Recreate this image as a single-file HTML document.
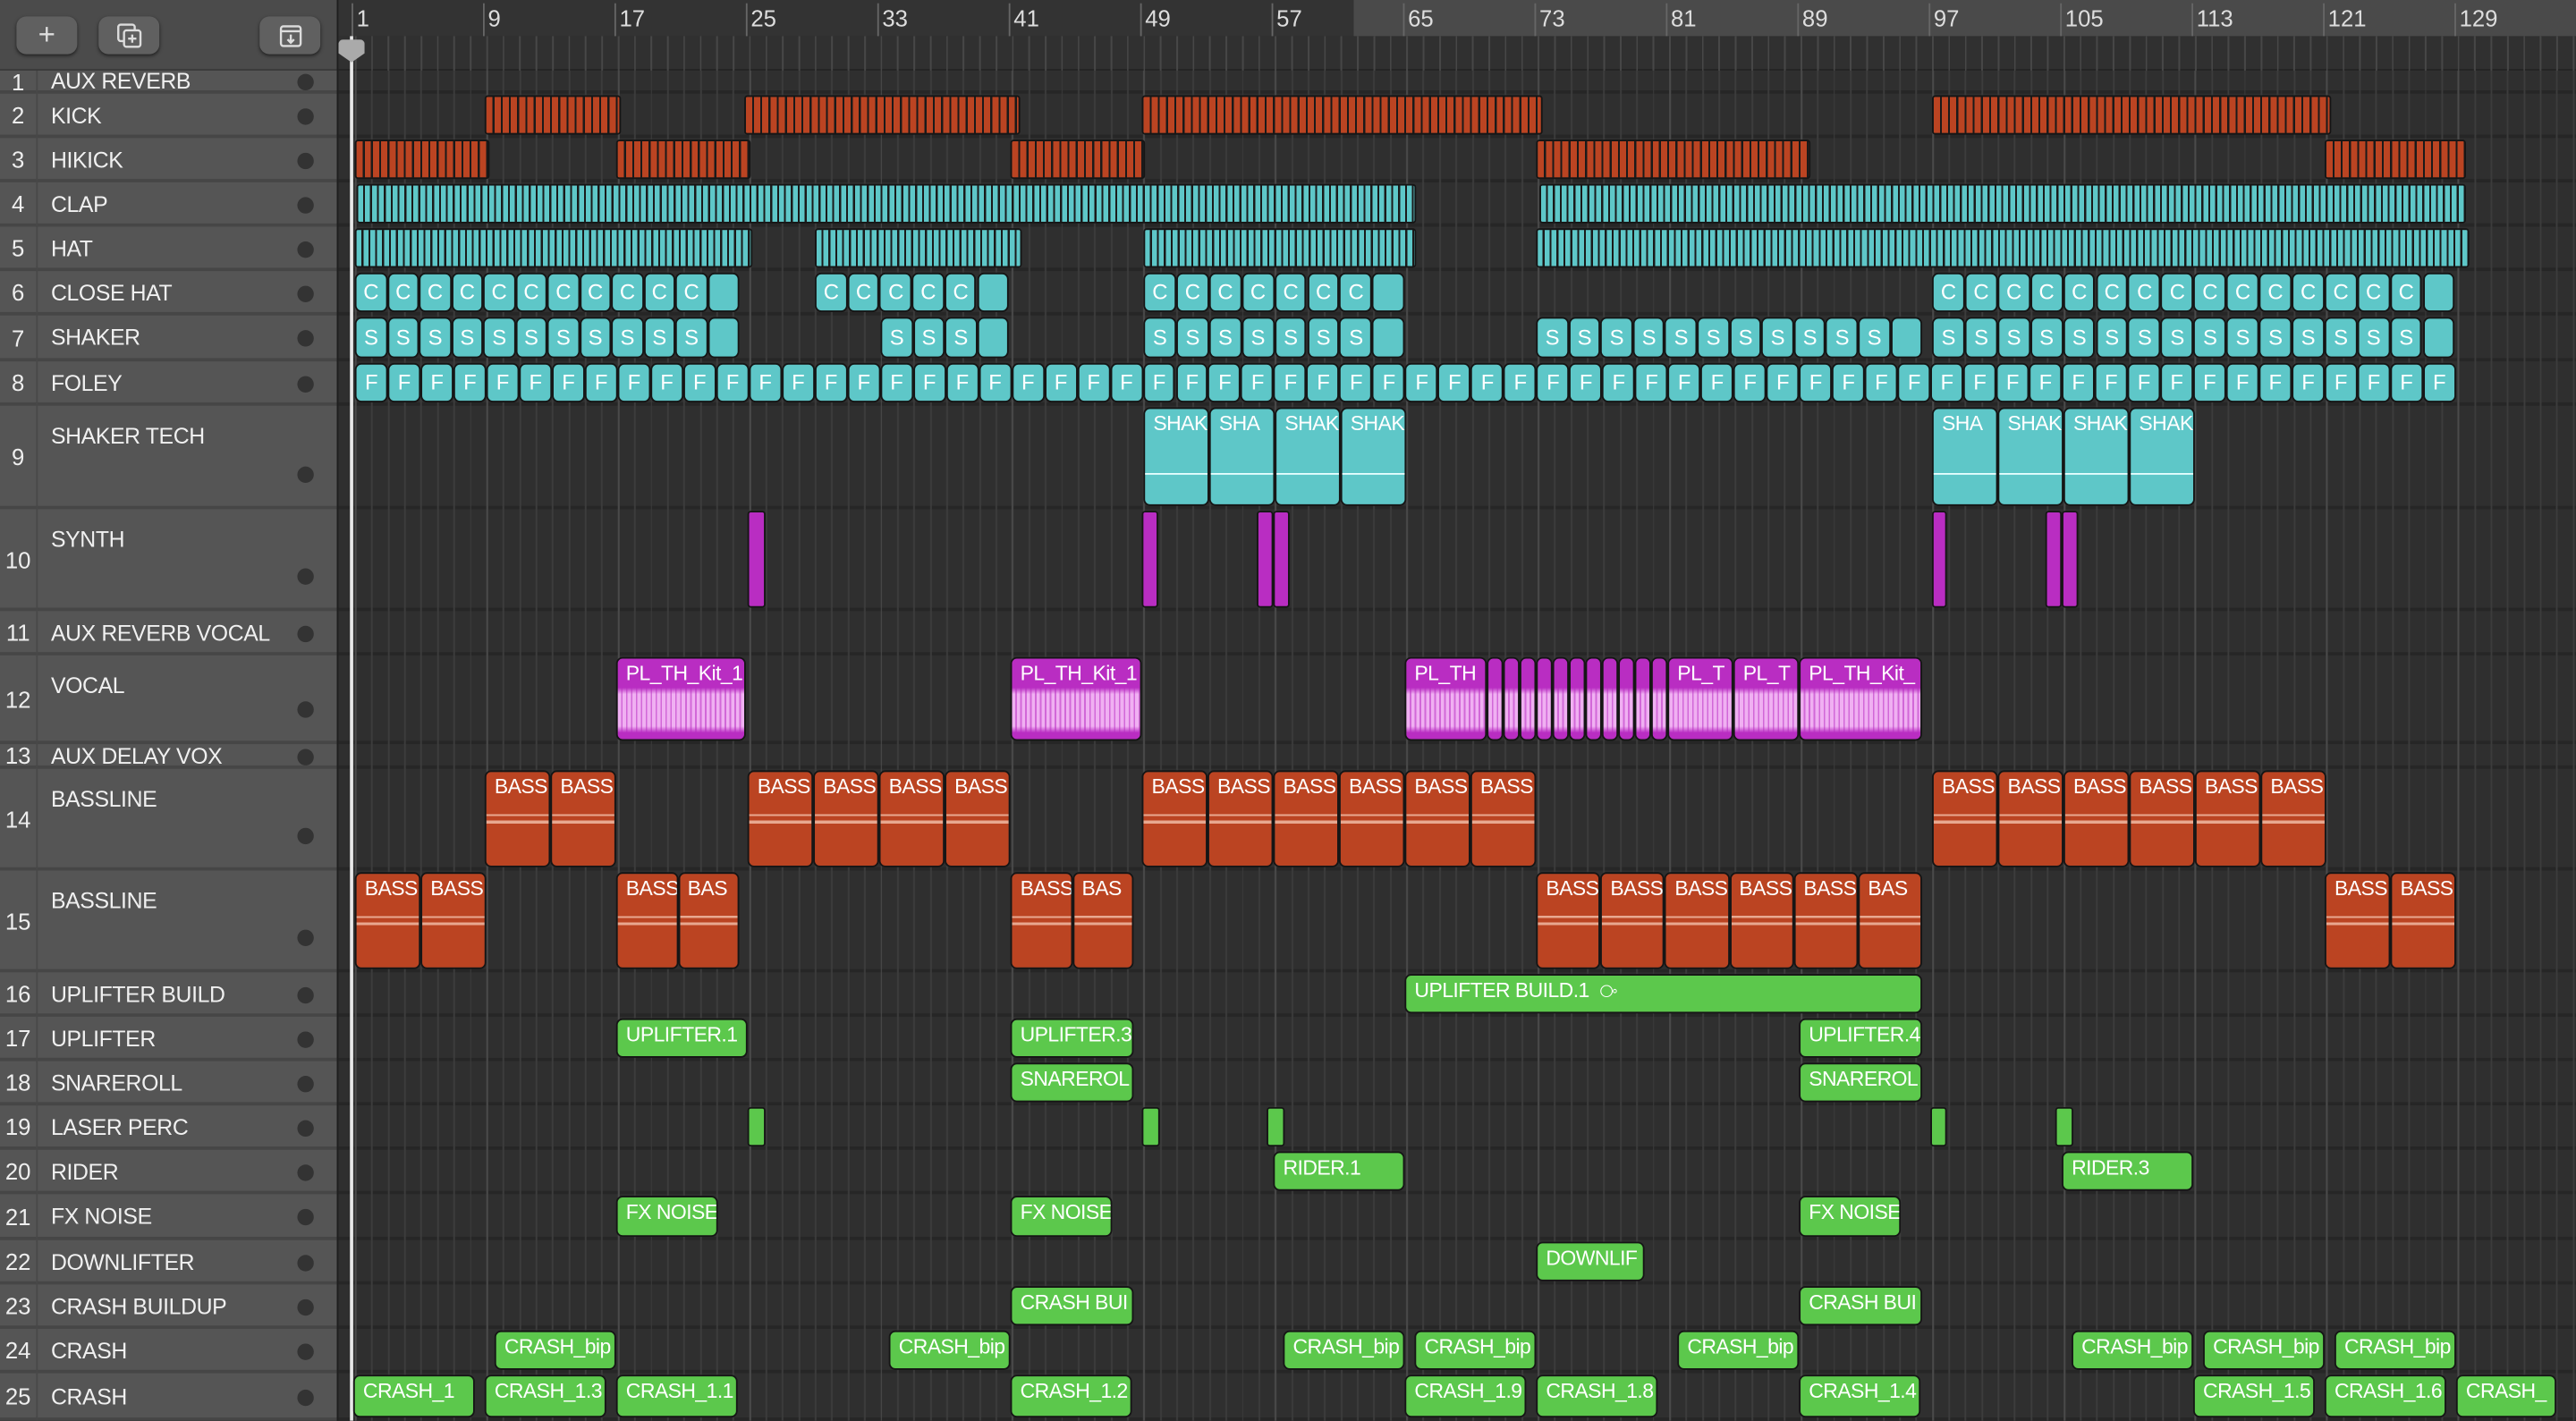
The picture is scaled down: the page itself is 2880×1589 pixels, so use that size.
<!DOCTYPE html>
<html><head><meta charset="utf-8"><style>
html,body{margin:0;padding:0;background:#2e2e2e;overflow:hidden;width:2880px;height:1588px}
#s{position:absolute;left:0;top:0;width:1568px;height:865px;transform:scale(1.83673);transform-origin:0 0;font-family:"Liberation Sans",sans-serif;overflow:hidden;background:#2f2f2f}
.a{position:absolute;box-sizing:border-box}
.lbl{color:#fff;font-size:12.5px;letter-spacing:-0.3px;white-space:nowrap;overflow:hidden}
.btn{position:absolute;top:10px;width:37px;height:23px;background:#606060;border-radius:6px;box-shadow:0 1px 2px #222;color:#ddd;text-align:center;line-height:23px;font-size:18px}
</style></head><body><div id="s"></div>
<script>
const S=document.getElementById('s');
function el(x,y,w,h,st,html){const d=document.createElement('div');d.className='a';d.style.cssText=`left:${x}px;top:${y}px;width:${w}px;height:${h}px;`+(st||'');if(html!==undefined)d.innerHTML=html;S.appendChild(d);return d;}
const rows=[[1,'AUX REVERB',43,57],[2,'KICK',57,84],[3,'HIKICK',84,111],[4,'CLAP',111,138],[5,'HAT',138,165],[6,'CLOSE HAT',165,192],[7,'SHAKER',192,220],[8,'FOLEY',220,247],[9,'SHAKER TECH',247,310],[10,'SYNTH',310,372],[11,'AUX REVERB VOCAL',372,399],[12,'VOCAL',399,453],[13,'AUX DELAY VOX',453,468],[14,'BASSLINE',468,530],[15,'BASSLINE',530,592],[16,'UPLIFTER BUILD',592,619],[17,'UPLIFTER',619,646],[18,'SNAREROLL',646,673],[19,'LASER PERC',673,700],[20,'RIDER',700,727],[21,'FX NOISE',727,755],[22,'DOWNLIFTER',755,782],[23,'CRASH BUILDUP',782,809],[24,'CRASH',809,836],[25,'CRASH',836,865]];
const R={};rows.forEach(r=>R[r[0]]=[r[2],r[3]]);
el(0,0,205,43,'background:#4b4b4b;border-bottom:1px solid #3a3a3a');
S.insertAdjacentHTML('beforeend','<div class="btn" style="left:10px">+</div><div class="btn" style="left:60px"><svg width="18" height="18" viewBox="0 0 18 18" style="margin-top:3px" fill="none" stroke="#ddd" stroke-width="1.3"><rect x="2" y="2" width="10" height="10" rx="1.5"/><rect x="5.5" y="5.5" width="10" height="10" rx="1.5" fill="#606060"/><path d="M10.5 8v5M8 10.5h5"/></svg></div><div class="btn" style="left:158px"><svg width="18" height="18" viewBox="0 0 18 18" style="margin-top:3px" fill="none" stroke="#ddd" stroke-width="1.3"><rect x="3" y="3" width="12" height="12" rx="1.5"/><path d="M3 6h12M9 8v5M7 11l2 2 2-2"/></svg></div>');
rows.forEach(([n,name,t,b])=>{
 const h=b-t;const tall=h>40;
 el(0,t,205,h,'background:#555;border-bottom:2px solid #464646');
 el(0,t,23,h,'border-right:1px solid #484848');
 el(0,t,22,h,`color:#eee;font-size:14px;text-align:center;line-height:${h}px`,n);
 const ly=tall?t+10:t;const lh=tall?18:h;
 el(31,ly,170,lh,`color:#f0f0f0;font-size:13.5px;letter-spacing:-0.2px;line-height:${lh}px;white-space:nowrap;overflow:hidden`,name);
 el(181,tall?b-26:t+h/2-5,10,10,'background:#333;border-radius:50%');
});
el(205,0,1,865,'background:#1e1e1e');
el(206,0,1362,22,'background:#333');
el(824,0,744,22,'background:#4a4a4a');
el(206,22,1362,21,'background:#303030;border-bottom:1px solid #242424');
el(206,22,1362,21,'background:repeating-linear-gradient(90deg,#4a4a4a 0 1px,transparent 1px 10px);background-position:10px 0;opacity:.9');
const bx=b=>216+(b-1)*10;
for(let b=1;b<=129;b+=8){el(bx(b)-2,2,1,20,'background:#666');el(bx(b)+1,1,40,20,'color:#ddd;font-size:14px;line-height:20px',b);}
rows.forEach(([n,name,t,b])=>{el(206,t,1362,b-t,'border-bottom:2px solid #262626');});
el(206,43,1362,822,'background:repeating-linear-gradient(90deg,#3c3c3c 0 1px,transparent 1px 10px);background-position:10px 0;pointer-events:none');
el(206,43,1362,822,'background:repeating-linear-gradient(90deg,#4a4a4a 0 1px,transparent 1px 80px);background-position:10px 0');
el(213,22,2,843,'background:#e8e8e8');
el(206,24,16,14,'background:#aaa;clip-path:polygon(0 0,100% 0,100% 60%,50% 100%,0 60%);border-radius:3px');
const RED='#bb4422',CY='#5ec7c8',MG='#b92dc2',GR='#5cc84c';
function reg(row,x1,x2,col,label,extra){const[t,b]=R[row];return el(x1,t+1,x2-x1,b-t-3,`background:${col};border:1px solid #151515;border-radius:4px;`+(extra||''),label!==undefined?`<div class="lbl" style="padding:2px 0 0 5px">${label}</div>`:undefined);}
function striped(row,x1,x2,col,step){reg(row,x1,x2,col,undefined,`border-radius:2px;background:repeating-linear-gradient(90deg,${col} 0 ${step-1.2}px,#1a1a1a ${step-1.2}px ${step}px)`);}
[[295,378],[453,621],[695,939],[1176,1419]].forEach(a=>striped(2,a[0],a[1],RED,5));
[[216,298],[375,457],[615,697],[935,1102],[1415,1501]].forEach(a=>striped(3,a[0],a[1],RED,5));
[[217,862],[937,1501]].forEach(a=>striped(4,a[0],a[1],CY,4.2));
[[216,458],[496,622],[696,862],[935,1503]].forEach(a=>striped(5,a[0],a[1],CY,4.2));
function blocks(row,x,n,w,col,lab,labs){for(let i=0;i<n;i++){const l=labs?labs[i]:(i==n-1&&lab!=='F'?'':lab);const d=reg(row,x+i*w,x+(i+1)*w,col,undefined);d.innerHTML=`<div class="lbl" style="text-align:center;line-height:${d.offsetHeight-2}px;font-size:13px">${l}</div>`;}}
blocks(6,216,12,19.5,CY,'C');blocks(6,496,6,19.7,CY,'C');blocks(6,696,8,19.9,CY,'C');blocks(6,1176,16,19.9,CY,'C');
blocks(7,216,12,19.5,CY,'S');blocks(7,536,4,19.5,CY,'S');blocks(7,696,8,19.9,CY,'S');blocks(7,935,12,19.6,CY,'S');blocks(7,1176,16,19.9,CY,'S');
blocks(8,216,64,19.98,CY,'F');
function shak(x,labs){labs.forEach((l,i)=>{const d=reg(9,x+i*40,x+(i+1)*40,CY,l);el(x+i*40+1,288,38,1,'background:#e8ffff');});}
shak(696,['SHAK','SHA','SHAK','SHAK']);shak(1176,['SHA','SHAK','SHAK','SHAK']);
[[455,466],[695,705],[765,775],[775,785],[1176,1185],[1245,1255],[1255,1265]].forEach(a=>reg(10,a[0],a[1],MG,undefined,'border-radius:2px'));
function voc(x1,x2,l){reg(12,x1,x2,MG,l,'background:repeating-linear-gradient(90deg,transparent 0 2px,rgba(185,45,194,.55) 2px 3px),linear-gradient(180deg,'+MG+' 0 36%,#f0b0f2 44% 84%,'+MG+' 92%)');}
voc(375,454,'PL_TH_Kit_1');voc(615,695,'PL_TH_Kit_1');voc(855,905,'PL_TH');
for(let x=905;x<1015;x+=10)voc(x,x+10,'');
voc(1015,1055,'PL_T');voc(1055,1095,'PL_T');voc(1095,1170,'PL_TH_Kit_');
function bass(row,x,n,w,labs){for(let i=0;i<n;i++){reg(row,x+i*w,x+(i+1)*w,RED,labs?labs[i]:'BASS','background:linear-gradient(180deg,'+RED+' 0 45%,#e8a890 45% 47%,'+RED+' 47% 52%,#e8a890 52% 55%,'+RED+' 55%)');}}
bass(14,295,2,40);bass(14,455,4,40);bass(14,695,6,40);bass(14,1176,6,40);
bass(15,216,2,40);bass(15,375,2,37.5,['BASS','BAS']);bass(15,615,2,37.5,['BASS','BAS']);bass(15,935,6,39.2,['BASS','BASS','BASS','BASS','BASS','BAS']);bass(15,1415,2,40);
reg(16,855,1170,GR,'UPLIFTER BUILD.1 &nbsp;<span style="font-size:11px">&#x29C2;</span>');
[[375,455,'UPLIFTER.1'],[615,690,'UPLIFTER.3'],[1095,1170,'UPLIFTER.4']].forEach(a=>reg(17,a[0],a[1],GR,a[2]));
reg(18,615,690,GR,'SNAREROL');reg(18,1095,1170,GR,'SNAREROL');
[[455,466],[695,706],[771,782],[1175,1185],[1251,1262]].forEach(a=>reg(19,a[0],a[1],GR,undefined,'border-radius:2px'));
reg(20,775,855,GR,'RIDER.1');reg(20,1255,1335,GR,'RIDER.3');
[375,615,1095].forEach(x=>reg(21,x,x+62,GR,'FX NOISE'));
reg(22,935,1001,GR,'DOWNLIF');
reg(23,615,690,GR,'CRASH BUI');reg(23,1095,1170,GR,'CRASH BUI');
[301,541,781,861,1021,1261,1341,1421].forEach(x=>reg(24,x,x+74,GR,'CRASH_bip'));
[[215,'CRASH_1'],[295,'CRASH_1.3'],[375,'CRASH_1.1'],[615,'CRASH_1.2'],[855,'CRASH_1.9'],[935,'CRASH_1.8'],[1095,'CRASH_1.4'],[1335,'CRASH_1.5'],[1415,'CRASH_1.6']].forEach(a=>reg(25,a[0],a[0]+74,GR,a[1]));
reg(25,1495,1556,GR,'CRASH_');
</script></body></html>
